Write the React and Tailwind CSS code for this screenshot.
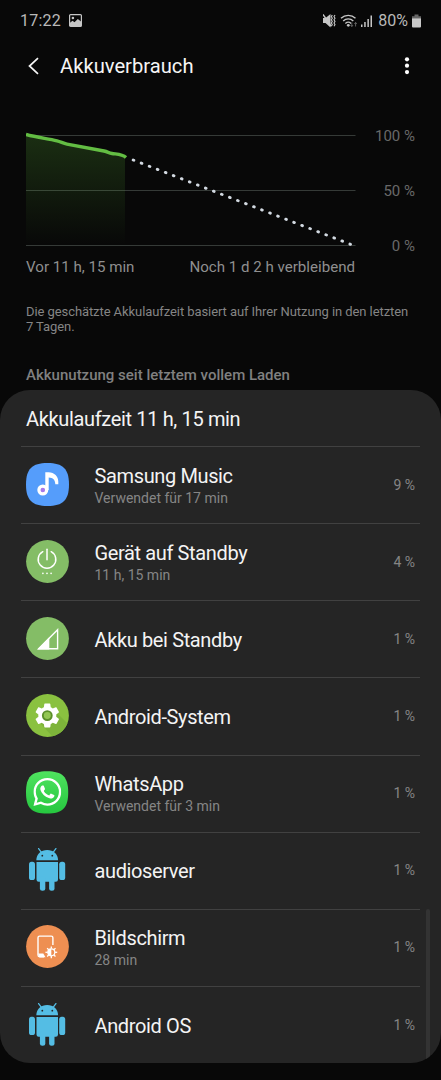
import React from "react";
import { SiWhatsapp } from "react-icons/si";

function MusicIcon() {
  return (
    <svg viewBox="0 0 43 43" className="size-[43px]">
      <path d="M21.5 0C37 0 43 6 43 21.5S37 43 21.5 43 0 37 0 21.5 6 0 21.5 0Z" fill="#559dfb" />
      <circle cx="16.8" cy="27" r="3.9" fill="#a678ea" stroke="#fff" strokeWidth="3.2" />
      <path d="M19.3 9.300h3.200c6 0 9.800 4.300 9.800 9.500v2.500h-3c0-4.200-2.300-6.500-6.600-6.700V27h-3.400Z" fill="#fff" />
    </svg>
  );
}

function StandbyIcon() {
  return (
    <svg viewBox="0 0 43 43" className="size-[43px]">
      <circle cx="21.500" cy="21.500" r="21.400" fill="#84bd66" />
      <g fill="none" stroke="#fff" strokeWidth="1.500" strokeLinecap="round">
        <path d="M21 9.300v10.500" />
        <path d="M16.800 11.700a8.800 8.800 0 1 0 8.400 0" />
      </g>
      <g fill="#fff">
        <circle cx="16.900" cy="33.300" r=".85" />
        <circle cx="21" cy="33.300" r=".85" />
        <circle cx="25.100" cy="33.300" r=".85" />
      </g>
    </svg>
  );
}

function SignalIcon() {
  return (
    <svg viewBox="0 0 43 43" className="size-[43px]">
      <circle cx="21.500" cy="21.500" r="21.400" fill="#84bd66" />
      <path d="M12.700 31.800 31.600 12.700v19.100Z" fill="none" stroke="#fff" strokeWidth="1.400" />
      <path d="M11.300 32.400 23.300 20.300v12.100Z" fill="#fff" />
    </svg>
  );
}

function SystemIcon() {
  return (
    <svg viewBox="0 0 43 43" className="size-[43px]">
      <defs>
        <clipPath id="system-disc">
          <circle cx="21.500" cy="21.500" r="21.400" />
        </clipPath>
      </defs>
      <circle cx="21.500" cy="21.500" r="21.400" fill="#8ac140" />
      <path d="M13 28 27 43h16V31L31 19Z" fill="#7db43a" clipPath="url(#system-disc)" />
      <g transform="translate(6.900 7.200) scale(1.200)">
        <path
          fill="#fff"
          d="M19.430 12.980c.04-.32.07-.64.07-.98s-.03-.66-.07-.98l2.110-1.650c.19-.15.24-.42.12-.64l-2-3.460c-.12-.22-.39-.3-.61-.22l-2.490 1c-.52-.4-1.080-.73-1.690-.98l-.38-2.650C14.460 2.180 14.250 2 14 2h-4c-.25 0-.46.18-.49.42l-.38 2.650c-.61.25-1.170.59-1.690.98l-2.490-1c-.23-.09-.49 0-.61.22l-2 3.460c-.13.22-.07.49.12.64l2.110 1.650c-.04.32-.07.65-.07.98s.03.66.07.98l-2.110 1.650c-.19.15-.24.42-.12.64l2 3.460c.12.22.39.3.61.22l2.490-1c.52.4 1.080.73 1.690.98l.38 2.650c.03.24.24.42.49.42h4c.25 0 .46-.18.49-.42l.38-2.650c.61-.25 1.170-.59 1.690-.98l2.490 1c.23.09.49 0 .61-.22l2-3.460c.12-.22.07-.49-.12-.64l-2.110-1.650Z"
        />
        <circle cx="12" cy="12" r="3.700" fill="#93c653" stroke="#5b8f2a" strokeWidth="1.600" />
      </g>
    </svg>
  );
}

function WhatsAppIcon() {
  return (
    <svg viewBox="0 0 43 43" className="size-[43px]">
      <defs>
        <linearGradient id="wa" x1="0" y1="0" x2="0" y2="1">
          <stop offset="0" stopColor="#4fe35f" />
          <stop offset="1" stopColor="#26c73f" />
        </linearGradient>
      </defs>
      <path d="M21 .3C36.500.3 42.200 6 42.200 21.400S36.500 42.500 21 42.500 0 36.800 0 21.400 5.500.3 21 .3Z" fill="url(#wa)" />
      <SiWhatsapp x="7.300" y="7" size={28} color="#fff" />
    </svg>
  );
}

function RobotIcon() {
  return (
    <svg viewBox="0 0 43 43" className="size-[43px]">
      <g fill="#54bde4">
        <path d="M10.300 12.200C10.500 6.200 15 2.100 21.200 2.100S31.900 6.200 32.100 12.200Z" />
        <path d="M10.500 13.900h21.500v17.600a2.200 2.200 0 0 1-2.200 2.200H12.700a2.200 2.200 0 0 1-2.200-2.200Z" />
        <rect x="3" y="13.700" width="6" height="18.300" rx="2.600" />
        <rect x="33.200" y="13.700" width="6" height="18.300" rx="2.600" />
        <rect x="13.900" y="28" width="5.400" height="14.800" rx="2.500" />
        <rect x="23.100" y="28" width="5.400" height="14.800" rx="2.500" />
      </g>
      <path d="m12.600.600 3 4.100M29.900.600l-3 4.100" stroke="#54bde4" strokeWidth="1.300" strokeLinecap="round" />
      <circle cx="16.300" cy="7.700" r=".9" fill="#252525" />
      <circle cx="26.300" cy="7.700" r=".9" fill="#252525" />
    </svg>
  );
}

const rays = [0, 45, 90, 135, 180, 225, 270, 315];

function ScreenIcon() {
  return (
    <svg viewBox="0 0 43 43" className="size-[43px]">
      <circle cx="21.500" cy="21.500" r="21.400" fill="#ee8f52" />
      <path d="M18 31.700h-4.400a1.600 1.600 0 0 1-1.600-1.600V12.700a1.600 1.600 0 0 1 1.600-1.600h11.700a1.600 1.600 0 0 1 1.600 1.600v7.300" fill="none" stroke="#fff" strokeWidth="1.400" />
      <path d="M12 28.500h5.300l2.200 3.800h-6Z" fill="#fff" />
      <g transform="translate(25.300 27.300)">
        {rays.map((a) => (
          <path key={a} d="M0-3.700V-5.900" stroke="#fff" strokeWidth="1.300" transform={`rotate(${a})`} />
        ))}
        <circle r="3.500" fill="none" stroke="#fff" strokeWidth="1.200" />
        <path d="M0-3.500a3.500 3.500 0 0 0 0 7Z" fill="#fff" />
      </g>
    </svg>
  );
}

const apps = [
  { name: "Samsung Music", detail: "Verwendet für 17 min", share: "9 %", Icon: MusicIcon },
  { name: "Gerät auf Standby", detail: "11 h, 15 min", share: "4 %", Icon: StandbyIcon },
  { name: "Akku bei Standby", share: "1 %", Icon: SignalIcon },
  { name: "Android-System", share: "1 %", Icon: SystemIcon },
  { name: "WhatsApp", detail: "Verwendet für 3 min", share: "1 %", Icon: WhatsAppIcon },
  { name: "audioserver", share: "1 %", Icon: RobotIcon },
  { name: "Bildschirm", detail: "28 min", share: "1 %", Icon: ScreenIcon },
  { name: "Android OS", share: "1 %", Icon: RobotIcon },
];

function StatusBar() {
  return (
    <div className="flex h-[41px] shrink-0 items-center justify-between pr-5 pl-5 text-[16px] text-[#b9b9b9]">
      <div className="flex items-center gap-[8px]">
        <span className="tracking-[0.2px]">17:22</span>
        <svg viewBox="0 0 13 13" className="size-[13px]">
          <rect x=".6" y=".6" width="11.800" height="11.800" rx="1" fill="none" stroke="#c6c6c6" strokeWidth="1.200" />
          <circle cx="3.900" cy="4" r="1.300" fill="#c6c6c6" />
          <path d="M1 11V8.800l2.500-2 2 1.400L8.800 5 12 7.500V12H1Z" fill="#c6c6c6" />
        </svg>
      </div>
      <div className="flex items-center">
        <svg viewBox="0 0 49 14" className="mr-[6px] h-[14px] w-[49px]" fill="#c6c6c6">
          <path d="M0 4h2.500L7.500 0v13.500l-5-4.500H0Z" />
          <path d="m0 .500 8 11.500" stroke="#c6c6c6" strokeWidth="1.400" />
          <path d="m9.300 1-1 1.600 1 1.600-1 1.600 1 1.600-1 1.600 1 1.600-1 1.600M12 1l-1 1.600 1 1.600-1 1.600 1 1.600-1 1.600 1 1.600-1 1.600" fill="none" stroke="#c6c6c6" strokeWidth="1.100" />
          <g fill="none" stroke="#c6c6c6" strokeWidth="1.400">
            <path d="M18 4.300a10.500 10.500 0 0 1 14.500 0" />
            <path d="M20.200 6.900a7.400 7.400 0 0 1 10.100 0" />
            <path d="M22.400 9.400a4.300 4.300 0 0 1 5.700 0" />
          </g>
          <circle cx="25.300" cy="11.300" r="1.400" />
          <path d="M28.800 8.500v4m-1.200-1.400 1.200 1.400 1.200-1.400M32.600 12.500v-4m-1.200 1.400 1.200-1.400 1.200 1.400" fill="none" stroke="#777" strokeWidth=".8" />
          <path d="M38 10.500h1.500V13H38ZM41.200 8h1.500v5h-1.500ZM44.400 5h1.500v8h-1.500ZM47.500 1.500H49V13h-1.500Z" />
        </svg>
        <span>80%</span>
        <svg viewBox="0 0 9 14" className="ml-[4px] h-[14px] w-[9px]">
          <path d="M2.500.500h4v1.800H9v2H0v-2h2.500Z" fill="#666" />
          <path d="M0 4.300h9v8.200a1 1 0 0 1-1 1H1a1 1 0 0 1-1-1Z" fill="#c9c9c9" />
        </svg>
      </div>
    </div>
  );
}

function Header() {
  return (
    <header className="flex h-[50px] shrink-0 items-center pr-[31px] pl-[27px]">
      <svg viewBox="0 0 12 18" className="h-[18px] w-[12px]">
        <path d="M11 1.200 2.500 9l8.500 7.800" fill="none" stroke="#f5f5f5" strokeWidth="1.700" />
      </svg>
      <h1 className="ml-[21px] flex-1 text-[20.200px] text-[#f5f5f5]">Akkuverbrauch</h1>
      <svg viewBox="0 0 6 18" className="h-[18px] w-[6px]" fill="#fff">
        <circle cx="3" cy="2.300" r="2.100" />
        <circle cx="3" cy="8.700" r="2.100" />
        <circle cx="3" cy="15.100" r="2.100" />
      </svg>
    </header>
  );
}

function Forecast() {
  return (
    <section className="mt-[37px] px-[26px] text-[#8f8f8f]">
      <div className="flex justify-between">
        <svg viewBox="0 0 330 126" className="h-[126px] w-[330px]">
          <defs>
            <linearGradient id="used" x1="0" y1="0" x2="0" y2="1">
              <stop offset="0" stopColor="#65c83c" stopOpacity=".2" />
              <stop offset="1" stopColor="#65c83c" stopOpacity="0" />
            </linearGradient>
          </defs>
          <path d="M0 7.500h329.500M0 62.500h329.500M0 117.500h329.500" stroke="#353a37" />
          <path d="M0 7 31 13.500 41 17 79 24 99 29v88H0Z" fill="url(#used)" />
          <path d="M0 6.500c11 3 21 4 31 6.300 4 1 6 2.500 10 3.300l37 6.900c4 1 5 2 8 2.500 5 .8 10 .5 14 4" fill="none" stroke="#63bd43" strokeWidth="3.400" />
          <path d="M107.200 32 324.500 116.300" fill="none" stroke="#d3dae2" strokeWidth="2.900" strokeLinecap="round" strokeDasharray=".7 7.910" />
        </svg>
        <div className="flex h-[126px] flex-col justify-between text-right text-[15px] leading-[16px] text-[#686868]">
          <span>100 %</span>
          <span>50 %</span>
          <span>0 %</span>
        </div>
      </div>
      <div className="mt-[4px] flex w-[329px] justify-between text-[15.100px] leading-[18px]">
        <span>Vor 11 h, 15 min</span>
        <span>Noch 1 d 2 h verbleibend</span>
      </div>
      <p className="mt-[28px] text-[13px] leading-[15px] tracking-[-0.080px] whitespace-nowrap text-[#858585]">
        Die geschätzte Akkulaufzeit basiert auf Ihrer Nutzung in den letzten
        <br />7 Tagen.
      </p>
      <h2 className="mt-[32px] text-[15px] leading-[18px] font-medium text-[#808080]">
        Akkunutzung seit letztem vollem Laden
      </h2>
    </section>
  );
}

function AppRow({ app }) {
  const { Icon } = app;
  return (
    <li className="mr-[21px] ml-[21px] flex h-[77.150px] items-center border-t border-[#414141] pr-[5px] pl-[5px]">
      <div className="pb-[2px]">
        <Icon />
      </div>
      <div className="ml-[25.500px] flex-1 pt-px">
        <div className="text-[20px] leading-[24px] tracking-[-0.370px] text-[#f4f4f4]">{app.name}</div>
        {app.detail && <div className="text-[14px] leading-[20px] text-[#858585]">{app.detail}</div>}
      </div>
      <span className="text-[14px] text-[#858585]">{app.share}</span>
    </li>
  );
}

export default function App() {
  return (
    <main className="flex h-[1080px] w-[441px] flex-col overflow-hidden bg-[#080808] font-[Roboto,sans-serif]">
      <StatusBar />
      <Header />
      <Forecast />
      <section className="relative mt-[6px] h-[673px] shrink-0 overflow-hidden rounded-[30px] bg-[#252525]">
        <h2 className="flex h-[56px] items-center pt-[2px] pl-[26px] text-[20px] tracking-[-0.350px] text-[#f4f4f4]">Akkulaufzeit 11 h, 15 min</h2>
        <ul>
          {apps.map((app) => (
            <AppRow key={app.name} app={app} />
          ))}
        </ul>
        <div className="absolute right-[11px] bottom-0 h-[154px] w-[4px] rounded-t-full bg-[#333333]" />
      </section>
    </main>
  );
}
